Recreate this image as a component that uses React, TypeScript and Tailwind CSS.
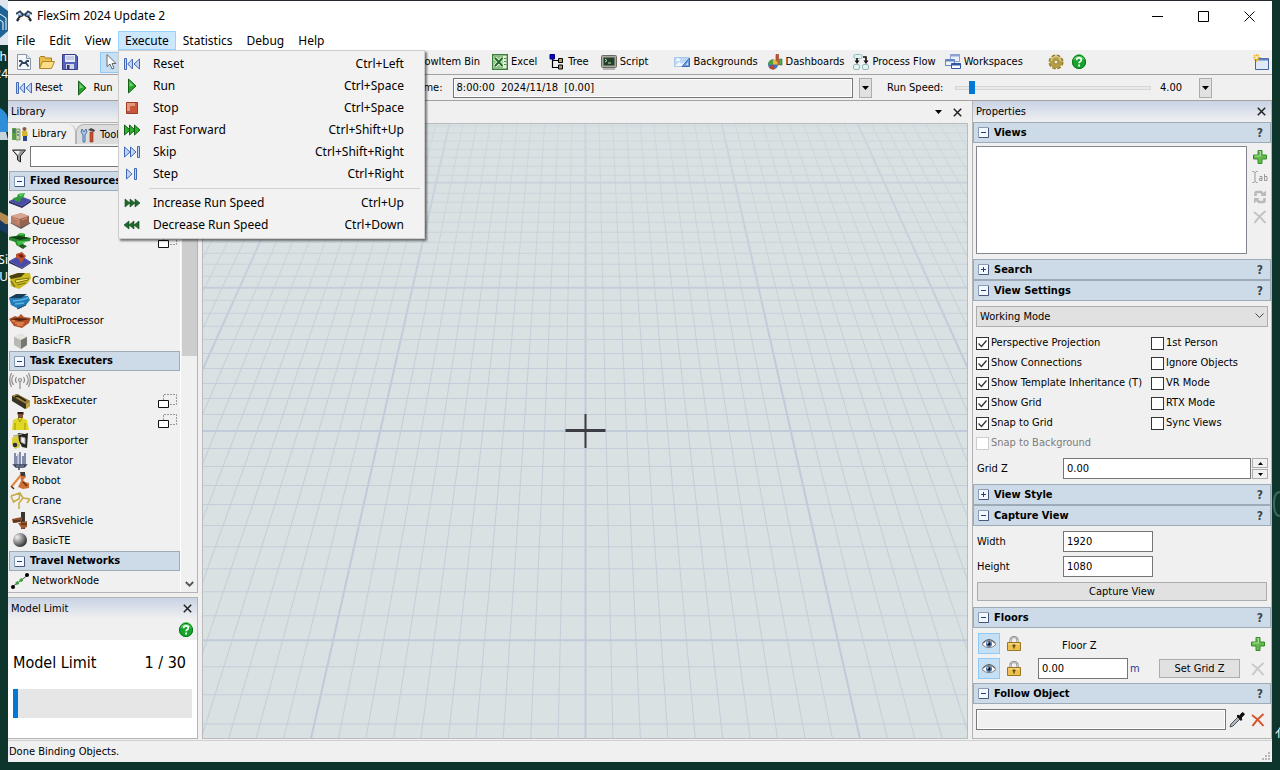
import { useState } from "react"
import type { ReactNode } from "react"
import { clsx } from "clsx"

/* ---------- small shared icons ---------- */

function RewindIcon() {
  return (
    <svg className="h-4 w-[18px] shrink-0" viewBox="0 0 18 16" fill="#c3d6f5" stroke="#4168b4">
      <path d="M1.5 2.5h2v11h-2zM9.5 3v10L4.8 8zM16.5 3v10L11 8z" />
    </svg>
  )
}

function PlayIcon() {
  return (
    <svg className="h-4 w-[18px] shrink-0" viewBox="0 0 18 16">
      <path d="M5.5 1v14L13 8z" fill="#28a428" stroke="#176017" />
      <path d="M6.5 3.5v5l4-1z" fill="#6fd36f" />
    </svg>
  )
}

function StopIcon() {
  return (
    <svg className="h-4 w-[18px] shrink-0" viewBox="0 0 18 16">
      <path d="M3.5 2.5h11v11h-11z" fill="#c9583a" stroke="#a03a1e" />
      <path d="M4 3h8v3H7v5H4z" fill="#e39a80" />
      <path d="M4 12h3" stroke="#6b5fa8" />
    </svg>
  )
}

function FastIcon() {
  return (
    <svg className="h-4 w-[18px] shrink-0" viewBox="0 0 18 16" fill="#30b030" stroke="#145c14">
      <path d="M11.5 3v10L17 8zM6.5 3v10L12 8zM1.5 3v10L7 8z" />
    </svg>
  )
}

function SkipIcon() {
  return (
    <svg className="h-4 w-[18px] shrink-0" viewBox="0 0 18 16" fill="#c3d6f5" stroke="#4168b4">
      <path d="M1.5 3v10L7 8zM7.5 3v10L13 8zM14.5 2.5h2v11h-2z" />
    </svg>
  )
}

function StepIcon() {
  return (
    <svg className="h-4 w-[18px] shrink-0" viewBox="0 0 18 16" fill="#c3d6f5" stroke="#4168b4">
      <path d="M3.5 3v10L9 8zM11.5 2.5h2v11h-2z" />
    </svg>
  )
}

function FasterIcon() {
  return (
    <svg className="h-4 w-[18px] shrink-0" viewBox="0 0 18 16" fill="#1d6b2b" stroke="#123f1a" strokeWidth=".6">
      <path d="M2 4v8l5-4zM7 4v8l5-4zM12 4v8l5-4z" />
    </svg>
  )
}

function SlowerIcon() {
  return (
    <svg className="h-4 w-[18px] shrink-0" viewBox="0 0 18 16" fill="#1d6b2b" stroke="#123f1a" strokeWidth=".6">
      <path d="M6 4v8L1 8zM11 4v8L6 8zM16 4v8l-5-4z" />
    </svg>
  )
}

function HelpIcon() {
  return (
    <svg className="size-4 shrink-0" viewBox="0 0 16 16">
      <circle cx="8" cy="8" r="7" fill="#17a32c" />
      <path d="M2 6a6 6 0 0 1 12 0q-6-3-12 0z" fill="#56cf62" />
      <circle cx="8" cy="8" r="6.6" fill="none" stroke="#0c7a1e" />
      <path d="M5.7 6.2q0-2.3 2.3-2.3t2.3 2q0 1.2-1.3 1.9-.9.5-.9 1.5" fill="none" stroke="#fff" strokeWidth="1.7" />
      <path d="M7.2 10.6h1.8v1.8H7.2z" fill="#fff" />
    </svg>
  )
}

function CloseIcon() {
  return (
    <svg className="size-[9px]" viewBox="0 0 9 9" stroke="#222" strokeWidth="1.5">
      <path d="M.8.8l7.4 7.4M8.2.8L.8 8.2" />
    </svg>
  )
}

function DownArrow() {
  return (
    <svg className="h-1 w-[7px]" viewBox="0 0 7 4">
      <path d="M0 0h7L3.5 4z" fill="#000" />
    </svg>
  )
}

function PlusIcon() {
  return (
    <svg className="size-[14px]" viewBox="0 0 14 14">
      <path d="M5 .5h4V5h4.5v4H9v4.5H5V9H.5V5H5z" fill="#63ba4b" stroke="#3b8a2c" />
      <path d="M6 1.5h1.5V6H2" stroke="#a9e09a" fill="none" />
    </svg>
  )
}

function CrossIcon({ color }: { color: string }) {
  return (
    <svg className="size-[14px]" viewBox="0 0 14 14" fill="none" stroke={color} strokeWidth="2">
      <path d="M1 2q6 4 11.5 11M12.5 1Q6 6 1.5 13" />
    </svg>
  )
}

function EyeIcon() {
  return (
    <svg className="h-3 w-4" viewBox="0 0 16 12">
      <path d="M1 6.5Q8-1.5 15 6.5 8 13 1 6.5z" fill="#fff" stroke="#7f7f7f" />
      <path d="M1.5 5Q8-2 14.5 5" fill="none" stroke="#555" />
      <circle cx="8" cy="6" r="3" fill="#4a6da0" />
      <circle cx="8" cy="6" r="1.4" fill="#111" />
      <circle cx="6.8" cy="5" r=".8" fill="#fff" />
    </svg>
  )
}

function LockIcon() {
  return (
    <svg className="h-[15px] w-[14px]" viewBox="0 0 14 15">
      <path d="M3.5 7V4a3.5 3 0 0 1 7 0v3" fill="none" stroke="#777" strokeWidth="2" />
      <path d="M3.5 7V4a3.5 3 0 0 1 7 0v3" fill="none" stroke="#e3e3e3" strokeWidth=".8" />
      <path d="M.5 6.5h13v8H.5z" fill="#edc14d" stroke="#9b7524" />
      <path d="M1.5 8h11" stroke="#fbe7a4" />
      <path d="M7 8.5v4M5.5 9.5h3" stroke="#5e440e" strokeWidth="1.4" />
    </svg>
  )
}

function ToggleBox({ open }: { open: boolean }) {
  return (
    <svg className="size-[11px] shrink-0" viewBox="0 0 11 11">
      <path d="M.5.5h10v10H.5z" fill="#f3f7ff" stroke="#8d9cb5" />
      <path d="M10.5 1v9.5H1" fill="none" stroke="#45587c" />
      <path d="M3 5.5h5" stroke="#27406f" />
      {!open && <path d="M5.5 3v5" stroke="#27406f" />}
    </svg>
  )
}

/* Two overlapping boxes shown next to items that open a group */
function GroupMark() {
  return (
    <svg className="h-[14px] w-5" viewBox="0 0 20 14" fill="none">
      <path d="M5.5 6V.5h13v10H12" stroke="#999" strokeDasharray="2 1" />
      <path d="M.5 6.5h10v7H.5z" fill="#fff" stroke="#111" />
    </svg>
  )
}

/* ---------- application logo ---------- */

function AppLogo() {
  return (
    <svg className="h-4 w-4 shrink-0" viewBox="0 0 16 16" fill="none">
      <path d="M0 6l4-2.5 3 3h2l3-3L16 6" stroke="#33465f" strokeWidth="2" />
      <path d="M1 13l3-4.500 3-1.500M15 13l-3-4.500-3-1.500" stroke="#1f2c3d" strokeWidth="2.400" />
      <path d="M2 7l4 .5M14 7l-4 .5" stroke="#5689c4" strokeWidth="1.5" />
      <path d="M3 11l2-2M13 11l-2-2" stroke="#e1a34a" strokeWidth="1" />
    </svg>
  )
}

/* ---------- toolbar icons ---------- */

const toolIcons: Record<string, ReactNode> = {
  new: (
    <>
      <path d="M1.5.5h9l4 4v11h-13z" fill="#f6f9fc" stroke="#8797a8" />
      <path d="M10.5.5v4h4" fill="#dbe6f2" stroke="#8797a8" />
      <path d="M3 7h2l2 2h2l2-2h2M3.5 12.5l2.500-3.500M12.5 12.5L10 9" stroke="#34465e" strokeWidth="1.8" fill="none" />
    </>
  ),
  open: (
    <>
      <path d="M.5 14V3.5l1-1h4l1 1.5h6v3" fill="#e8bd4c" stroke="#a87a1f" />
      <path d="M.5 14.5l3-7h12l-3 7z" fill="#fbdd85" stroke="#b1862a" />
    </>
  ),
  save: (
    <>
      <path d="M.5.5h13l2 2v13H.5z" fill="#5561bd" stroke="#363c85" />
      <path d="M3 1h10v7H3z" fill="#e7ebf8" />
      <path d="M4 3h8M4 5h8" stroke="#a5b2d6" />
      <path d="M4 10h8v5H4z" fill="#d2d6e4" />
      <path d="M5 11h2.5v4H5z" fill="#343a72" />
    </>
  ),
  pointer: <path d="M4 .5v12l3-2.5 2 5 2-1-2-4.500h4z" fill="#fff" stroke="#666" />,
  excel: (
    <>
      <path d="M.7.7h14.6v14.6H.7z" fill="#e5f2dd" stroke="#3a7f3a" strokeWidth="1.400" />
      <path d="M2 2h9v12H2z" fill="#8cc07d" />
      <path d="M3 4l7.500 8M10.500 4L3 12" stroke="#fff" strokeWidth="3.400" />
      <path d="M3 4l7.500 8M10.500 4L3 12" stroke="#1f6a27" strokeWidth="2" />
      <path d="M12 4.5h2.500M12 7.5h2.500M12 10.5h2.500" stroke="#4a914a" />
    </>
  ),
  tree: (
    <>
      <path d="M3.5 4v9.5H10M3.5 6.5H10" fill="none" stroke="#000" strokeWidth="1.2" />
      <path d="M1 .5h4.500V5H1z" fill="#0a0ac0" stroke="#000080" />
      <path d="M9.5 4.5h4v4h-4zM9.5 11h4v4h-4z" fill="#b59a6b" stroke="#000" />
    </>
  ),
  script: (
    <>
      <rect x=".5" y="1.5" width="15" height="12" rx="1" fill="#a9a9a0" stroke="#6a6a62" />
      <path d="M2.5 3.5h11v8h-11z" fill="#25402a" />
      <path d="M4 5l2 1.500L4 8M7 9h3" stroke="#b7e0b0" fill="none" />
      <path d="M2 15h12" stroke="#777" />
    </>
  ),
  backgrounds: (
    <>
      <path d="M.5 3.5h15v9H.5z" fill="#bcd8f7" stroke="#a9c8ec" />
      <path d="M1 12l4-4 3 2 2-2v4z" fill="#f4f9ff" />
      <path d="M2 6h4M3 5h2" stroke="#fff" strokeWidth="1.5" />
      <path d="M8 12.5L15.500 4v8.500z" fill="#6e9de0" stroke="#3c6dbb" />
      <path d="M12 11l2-3v3z" fill="#d7e7fb" />
    </>
  ),
  dashboards: (
    <>
      <path d="M9 .5h2.5V11H9z" fill="#d9502c" stroke="#8c2f18" strokeWidth=".6" />
      <path d="M12.5 5H15v6h-2.500z" fill="#4bb04b" stroke="#2a702a" strokeWidth=".6" />
      <circle cx="6" cy="10.5" r="5" fill="#3f72c0" />
      <path d="M6 10.5v-5a5 5 0 0 0-5 5z" fill="#4fa13c" />
      <path d="M6 10.5h5a5 5 0 0 0-5-5z" fill="#e7b93c" />
      <path d="M6 10.5l-4 3a5 5 0 0 0 6 1.600z" fill="#c04228" />
    </>
  ),
  flow: (
    <>
      <rect x="1" y=".5" width="8" height="4" rx="1.5" fill="#e4f3f3" stroke="#93b9b9" />
      <rect x=".5" y="10.5" width="6" height="5" rx="1.5" fill="#e4f3f3" stroke="#93b9b9" />
      <rect x="9.5" y="10.5" width="6" height="5" rx="1.5" fill="#e4f3f3" stroke="#93b9b9" />
      <path d="M4 4v4M10 3h3v5" stroke="#111" strokeWidth="1.6" fill="none" />
      <path d="M1.5 6.5h5L4 10zM10.500 6.500h5L13 10z" fill="#111" />
    </>
  ),
  workspaces: (
    <>
      <path d="M5.5.5h9v7h-9z" fill="#eaf0fb" stroke="#8ba3ce" />
      <path d="M5.5 1.5h9" stroke="#8ba3ce" strokeWidth="2" />
      <path d="M.5 5.5h9v6h-9z" fill="#eef3fc" stroke="#6384c2" />
      <path d="M.5 6.5h9" stroke="#6384c2" strokeWidth="2" />
      <path d="M6.5 9.5h9v5h-9z" fill="#fff" stroke="#3157a5" />
      <path d="M6.5 10.5h9" stroke="#3157a5" strokeWidth="2" />
    </>
  ),
  gear: (
    <>
      <circle cx="8" cy="8" r="6" fill="none" stroke="#8f7a2c" strokeWidth="3" strokeDasharray="3.200 1.510" />
      <circle cx="8" cy="8" r="4.200" fill="none" stroke="#b59d45" strokeWidth="4" />
      <path d="M3.500 7a4.500 4.500 0 0 1 9 0" fill="none" stroke="#dcc980" strokeWidth="1.500" />
      <circle cx="8" cy="8" r="2" fill="#f4f0dd" stroke="#8f7a2c" />
    </>
  ),
  window: (
    <>
      <path d="M2.5 4.5h13v11h-13z" fill="#dfe9f8" stroke="#45659f" />
      <path d="M3 5.5h12" stroke="#5c80c3" strokeWidth="2" />
      <path d="M3.5 0v8M0 3.5h8M1 1l5 5M6 1L1 6" stroke="#e3b83e" strokeWidth="1.2" />
      <circle cx="3.5" cy="3.5" r="1.5" fill="#fff3b0" />
    </>
  ),
}

function ToolIcon({ name }: { name: string }) {
  return (
    <svg className="size-4 shrink-0" viewBox="0 0 16 16">
      {toolIcons[name]}
    </svg>
  )
}

function ToolButton({ icon, label }: { icon: string; label: string }) {
  return (
    <button className="flex items-center gap-[3px] whitespace-nowrap">
      <ToolIcon name={icon} />
      {label}
    </button>
  )
}

/* ---------- library icons ---------- */

const libraryIcons: Record<string, ReactNode> = {
  Source: (
    <>
      <path d="M0 9l11-5 11 4-9 6z" fill="#4a4aa8" />
      <path d="M0 9l13 5 9-6v2l-9 6L0 11z" fill="#2b2b66" />
      <path d="M4 6l4-1 1-3 7-1-2 5-2 1-1 3-5-1z" fill="#2f9a3c" />
      <path d="M9 2l7-1-4 4z" fill="#5cc763" />
    </>
  ),
  Queue: (
    <>
      <path d="M1 11l10-3 11 3-10 6z" fill="#6a5850" />
      <path d="M2 4l10-3 8 3v7l-9 4-9-4z" fill="#b27e6a" />
      <path d="M2 4l10-3 8 3-9 3z" fill="#d7a591" />
      <path d="M11 7v8l9-4V4z" fill="#936352" />
      <path d="M4 6l5 2v4M13 8l5-2" stroke="#e88b68" fill="none" />
    </>
  ),
  Processor: (
    <>
      <path d="M0 5l7-1 4-3 5 1v3l6 1-1 3-7 1-1 3-5 1-2-4-6-2z" fill="#278a2e" />
      <path d="M0 5l10-1 11 2-10 2z" fill="#123f15" />
      <path d="M8 10h8M9 12h6M10 2h5" stroke="#4ccb50" strokeWidth="1.5" />
      <path d="M9 14l5 3 4-3-5-2z" fill="#1e5f22" />
    </>
  ),
  Sink: (
    <>
      <path d="M0 9l11-6 11 7-9 6z" fill="#4a4aa8" />
      <path d="M0 9l13 7 9-6v1l-9 6L0 11z" fill="#2b2b66" />
      <path d="M7 2l6-2 4 4-3 4-2 4-2-5-3-1z" fill="#c05030" />
      <path d="M9 3l4-1 2 3-3 1z" fill="#712414" />
    </>
  ),
  Combiner: (
    <>
      <path d="M1 4l8-3h12l1 5-3 5-9 6-8-3z" fill="#cdbb24" />
      <path d="M0 4l9-3h7l-4 4-10 2z" fill="#4a430f" />
      <path d="M6 8l14-2-1 2-12 3zM8 13l9-2" stroke="#7e720f" fill="#efe25c" />
      <path d="M2 9l4 6" stroke="#807515" strokeWidth="1.5" />
    </>
  ),
  Separator: (
    <>
      <path d="M0 6l7-3 12 1 2 4-4 5-7 4-8-4z" fill="#257bb5" />
      <path d="M0 6l7-4h11l-6 4z" fill="#183c58" />
      <path d="M4 9l8-1 7-2M6 12l9-1" stroke="#58b4e8" strokeWidth="1.5" fill="none" />
      <path d="M8 17l9-4" stroke="#12496f" />
    </>
  ),
  MultiProcessor: (
    <>
      <path d="M0 7l6-3 3 1 3-3 3 3 7 1-2 5-7 5-8-2-3-4z" fill="#b4532a" />
      <path d="M1 7l8-1 12 1-10 2z" fill="#57220d" />
      <path d="M6 11h9M8 13h6M3 9h3" stroke="#e58a55" strokeWidth="1.5" />
    </>
  ),
  BasicFR: (
    <>
      <path d="M5 5l7-3 6 3v8l-6 4-7-4z" fill="#b9b9b3" />
      <path d="M5 5l7-3 6 3-6 3z" fill="#e6e6e0" />
      <path d="M12 8l6-3v8l-6 4z" fill="#777770" />
    </>
  ),
  Dispatcher: (
    <g fill="none" stroke="#8b8b8b" strokeWidth="1.2">
      <circle cx="11" cy="8" r="1.5" />
      <path d="M11 9.500V17M7.500 5q-2 3 0 6M14.500 5q2 3 0 6M4.500 3q-3.500 5 0 10M17.500 3q3.500 5 0 10M2.500 1Q-1 8 2.500 15M19.500 1q3.500 7 0 14" />
    </g>
  ),
  TaskExecuter: (
    <>
      <path d="M3 4l5-2 13 7v5l-5 3-13-8z" fill="#383225" />
      <path d="M3 4l5-2 13 7-4 3z" fill="#9b8438" />
      <path d="M6 5l3-1 8 5" stroke="#221d12" fill="none" strokeWidth="1.5" />
      <path d="M17 12l4-3v5l-4 3z" fill="#c3aa3d" />
    </>
  ),
  Operator: (
    <>
      <path d="M9 0h5v6H9z" fill="#805336" />
      <path d="M8.500 0h6v3l-1-1H9l-.5 1z" fill="#2c1b12" />
      <path d="M4 8l5-2h4l5 2 2 10H3z" fill="#e0d720" />
      <path d="M9 6l2 4 2-4M6 11v7M16 11v7" stroke="#9f970f" fill="none" />
    </>
  ),
  Transporter: (
    <>
      <path d="M3 6l6-4 2 3v10l-5 2-3-5z" fill="#d9cd3c" />
      <path d="M9 1l7 1 3-1-1 15-5-1-3-6z" fill="#26241e" />
      <path d="M4 4l9-2M12 5l4 1v6l-4-2z" stroke="#aaa" fill="#f2f2e8" />
      <circle cx="6" cy="13" r="2.3" fill="#333" />
    </>
  ),
  Elevator: (
    <g fill="none" stroke="#5d6b92" strokeWidth="1.5">
      <path d="M6 1v13M11 0v14M16 1v14M8 4v9M14 4v9" />
      <path d="M5 13h12l-2 2H7zM10 15v3" stroke="#39415e" />
      <path d="M9 2v10" stroke="#b7c1da" />
    </g>
  ),
  Robot: (
    <>
      <path d="M11 2l5-1 1 4-3 3 2 2 4 1v5l-6 1-5-2 3-6z" fill="#cf6f35" />
      <path d="M12 3L3 14" stroke="#e0853d" strokeWidth="2" />
      <path d="M11 0h5v4h-4z" fill="#3b3b3b" />
      <path d="M2 14l3 3M14 10l4 4" stroke="#5d2d12" strokeWidth="1.5" />
    </>
  ),
  Crane: (
    <g fill="none" stroke="#c8a944" strokeWidth="1.5">
      <path d="M2 4l9-3 3 5 7 1M2 4l3 7M11 1l-1 6-6 3M14 6l-4 5v6M21 7l-3 4" />
    </g>
  ),
  ASRSvehicle: (
    <>
      <path d="M12 0h4v17h-4z" fill="#3c352f" />
      <path d="M3 7l10-2v4l-6 2H4z" fill="#8b4d2a" />
      <path d="M9 11l9-2v6l-5 2z" fill="#a35a2f" />
      <path d="M4 9h8M12 12h6" stroke="#331c0f" />
    </>
  ),
  BasicTE: (
    <>
      <defs>
        <radialGradient id="ball" cx=".3" cy=".3" r=".8">
          <stop offset="0" stopColor="#f3f3f3" />
          <stop offset=".5" stopColor="#8c8c8c" />
          <stop offset="1" stopColor="#222" />
        </radialGradient>
      </defs>
      <circle cx="11" cy="8" r="7" fill="url(#ball)" />
    </>
  ),
  NetworkNode: (
    <>
      <path d="M3 15L19 3" stroke="#555" />
      <path d="M7 12l8-6" stroke="#3ba03b" strokeWidth="3" strokeDasharray="3 2" />
      <circle cx="4" cy="15" r="2" />
      <circle cx="18" cy="3" r="2" />
    </>
  ),
}

const library = [
  {
    title: "Fixed Resources",
    items: ["Source", "Queue", "Processor", "Sink", "Combiner", "Separator", "MultiProcessor", "BasicFR"],
  },
  {
    title: "Task Executers",
    items: [
      "Dispatcher",
      "TaskExecuter",
      "Operator",
      "Transporter",
      "Elevator",
      "Robot",
      "Crane",
      "ASRSvehicle",
      "BasicTE",
    ],
  },
  { title: "Travel Networks", items: ["NetworkNode"] },
]

const grouped = ["Processor", "TaskExecuter", "Operator"]

/* ---------- menu ---------- */

const executeMenu = [
  { label: "Reset", keys: "Ctrl+Left", icon: <RewindIcon /> },
  { label: "Run", keys: "Ctrl+Space", icon: <PlayIcon /> },
  { label: "Stop", keys: "Ctrl+Space", icon: <StopIcon /> },
  { label: "Fast Forward", keys: "Ctrl+Shift+Up", icon: <FastIcon /> },
  { label: "Skip", keys: "Ctrl+Shift+Right", icon: <SkipIcon /> },
  { label: "Step", keys: "Ctrl+Right", icon: <StepIcon /> },
]

const speedMenu = [
  { label: "Increase Run Speed", keys: "Ctrl+Up", icon: <FasterIcon /> },
  { label: "Decrease Run Speed", keys: "Ctrl+Down", icon: <SlowerIcon /> },
]

function MenuRow({ label, keys, icon }: { label: string; keys: string; icon: ReactNode }) {
  return (
    <button role="menuitem" className="flex h-[22px] w-full items-center pr-5 pl-1 hover:bg-[#91c9f7]">
      {icon}
      <span className="ml-3 flex-1 text-left">{label}</span>
      <span>{keys}</span>
    </button>
  )
}

function MenuBar() {
  const [open, setOpen] = useState(true)

  return (
    <nav className="flex h-[19px] pl-px font-['Noto_Sans',sans-serif] text-xs">
      {["File", "Edit", "View"].map((name) => (
        <button key={name} className="px-[7px]">
          {name}
        </button>
      ))}
      <div className="relative">
        <button
          className={clsx("h-full border px-1.5", open ? "border-[#99d1ff] bg-[#cce8ff]" : "border-transparent")}
          onClick={() => setOpen(!open)}
        >
          Execute
        </button>
        {open && (
          <div
            role="menu"
            className="absolute top-full left-0 z-10 w-[307px] border border-[#ccc] bg-[#f2f2f2] py-[2px] shadow-[2px_2px_2px_rgba(0,0,0,0.5)]"
          >
            {executeMenu.map((item) => (
              <MenuRow key={item.label} {...item} />
            ))}
            <div className="my-[3px] mr-1 ml-[30px] h-px bg-[#d0d0d0]" />
            {speedMenu.map((item) => (
              <MenuRow key={item.label} {...item} />
            ))}
          </div>
        )}
      </div>
      {["Statistics", "Debug", "Help"].map((name) => (
        <button key={name} className="px-[7px]">
          {name}
        </button>
      ))}
    </nav>
  )
}

/* ---------- window chrome ---------- */

function TitleBar() {
  return (
    <header className="flex h-[30px] items-center pl-2 font-['Noto_Sans',sans-serif] text-xs">
      <AppLogo />
      <h1 className="ml-[5px] flex-1">FlexSim 2024 Update 2</h1>
      <button aria-label="Minimize" className="flex h-full w-[46px] items-center justify-center">
        <svg className="size-[11px]" viewBox="0 0 11 11" stroke="#000">
          <path d="M0 5.5h11" />
        </svg>
      </button>
      <button aria-label="Maximize" className="flex h-full w-[46px] items-center justify-center">
        <svg className="size-[11px]" viewBox="0 0 11 11" fill="none" stroke="#000">
          <path d="M.5.5h10v10H.5z" />
        </svg>
      </button>
      <button aria-label="Close" className="flex h-full w-[46px] items-center justify-center">
        <svg className="size-[11px]" viewBox="0 0 11 11" stroke="#000">
          <path d="M.5.5l10 10M10.5.5l-10 10" />
        </svg>
      </button>
    </header>
  )
}

function MainToolbar() {
  return (
    <div className="flex h-[25px] items-center gap-3 border-b border-[#a8a0a0] pr-[3px] pl-2">
      <div className="flex items-center gap-[7px]">
        <button aria-label="New">
          <ToolIcon name="new" />
        </button>
        <button aria-label="Open">
          <ToolIcon name="open" />
        </button>
        <button aria-label="Save">
          <ToolIcon name="save" />
        </button>
      </div>
      <button
        aria-label="Select"
        className="ml-[10px] flex h-[21px] w-[22px] items-center justify-center border border-[#90c8f6] bg-[#c5dff5]"
      >
        <ToolIcon name="pointer" />
      </button>
      <div className="ml-[263px] flex items-center gap-3">
        <ToolButton icon="tree" label="FlowItem Bin" />
        <ToolButton icon="excel" label="Excel" />
        <ToolButton icon="tree" label="Tree" />
        <ToolButton icon="script" label="Script" />
      </div>
      <div className="ml-[14px] flex items-center gap-[9px]">
        <ToolButton icon="backgrounds" label="Backgrounds" />
        <ToolButton icon="dashboards" label="Dashboards" />
        <ToolButton icon="flow" label="Process Flow" />
        <ToolButton icon="workspaces" label="Workspaces" />
      </div>
      <div className="ml-[13px] flex flex-1 items-center gap-[7px]">
        <button aria-label="Settings">
          <ToolIcon name="gear" />
        </button>
        <button aria-label="Help">
          <HelpIcon />
        </button>
      </div>
      <button aria-label="New window">
        <ToolIcon name="window" />
      </button>
    </div>
  )
}

function RunToolbar() {
  const [speed, setSpeed] = useState(7)

  return (
    <div className="flex h-[26px] items-center border-b border-[#a8a0a0] pr-[60px] pl-[7px]">
      <button className="flex items-center gap-0.5">
        <RewindIcon />
        Reset
      </button>
      <button className="ml-[10px] flex items-center gap-[3px]">
        <PlayIcon />
        Run
      </button>
      <label htmlFor="run-time" className="ml-[276px] w-[54px] text-right whitespace-nowrap">
        Run Time:
      </label>
      <input
        id="run-time"
        readOnly
        value="8:00:00  2024/11/18  [0.00]"
        className="ml-[10px] h-5 min-w-0 flex-1 border border-[#767676] bg-[#f0f0f0] px-[3px] whitespace-pre outline outline-offset-[-2px] outline-white"
      />
      <button
        aria-label="Run time options"
        className="ml-1.5 flex h-5 w-[13px] items-center justify-center border border-[#adadad] bg-[#e1e1e1]"
      >
        <DownArrow />
      </button>
      <label htmlFor="speed" className="ml-[15px] w-[56px] whitespace-nowrap">
        Run Speed:
      </label>
      <input
        id="speed"
        type="range"
        min={0}
        max={100}
        value={speed}
        onChange={(e) => setSpeed(Number(e.target.value))}
        className="ml-3 h-1 w-[196px] appearance-none border border-[#d6d6d6] bg-[#e7eaea] [&::-webkit-slider-thumb]:h-[13px] [&::-webkit-slider-thumb]:w-1.5 [&::-webkit-slider-thumb]:appearance-none [&::-webkit-slider-thumb]:bg-[#0078d7]"
      />
      <span className="ml-[9px] w-[39px]">4.00</span>
      <button
        aria-label="Run speed options"
        className="flex h-5 w-[13px] items-center justify-center border border-[#adadad] bg-[#e1e1e1]"
      >
        <DownArrow />
      </button>
    </div>
  )
}

function PanelHeader({ title }: { title: string }) {
  return (
    <div className="flex h-[21px] shrink-0 items-center justify-between bg-linear-to-b from-[#c9d3e5] to-[#f0f0f0] pr-[5px] pl-[3px]">
      <h2>{title}</h2>
      <button aria-label={`Close ${title}`}>
        <CloseIcon />
      </button>
    </div>
  )
}

/* ---------- left side ---------- */

function LibraryPanel() {
  return (
    <section className="flex min-h-0 flex-1 flex-col border-r border-b border-[#b4b4b4]">
      <PanelHeader title="Library" />
      <div className="flex h-[22px] shrink-0 items-end border-t border-[#b4b4b4]">
        <button className="flex h-5 w-[68px] items-center gap-[3px] rounded-tr-lg border-r border-[#b4b4b4] pl-[3px]">
          <svg className="h-4 w-[18px] shrink-0" viewBox="0 0 18 16">
            <path d="M1 2h4v12H1z" fill="#5f9e4a" />
            <path d="M5 3h4v11H5z" fill="#c4dca4" stroke="#5f7f43" strokeWidth=".7" />
            <path d="M2 4h2M2 6h2M6 6h2M6 9h2" stroke="#2c48a0" />
            <path d="M11 5h5l1 5h-1v5h-4v-5h-1z" fill="#d7b631" />
            <path d="M12 10h4v5h-4z" fill="#2c4588" />
            <circle cx="13.5" cy="3" r="2" fill="#8a5a34" />
          </svg>
          Library
        </button>
        <button className="flex h-5 flex-1 items-center gap-1 rounded-tl-lg border border-b-0 border-[#b4b4b4] bg-[#dcdcdc] pl-[3px]">
          <svg className="size-4 shrink-0" viewBox="0 0 16 16">
            <path d="M2 2l2 3 2-3 1 3-2 3v7H3V8L1 5z" fill="#a9c8ea" stroke="#4d76ab" />
            <path d="M8 3l3-2 4 2-1 2-3-1z" fill="#444" />
            <path d="M10 5h3v10h-3z" fill="#cc4f2d" stroke="#85301a" strokeWidth=".6" />
          </svg>
          Toolbox
        </button>
      </div>
      <div className="flex h-6 shrink-0 items-center gap-1 pl-1">
        <svg className="size-[14px] shrink-0" viewBox="0 0 14 14">
          <path d="M.5 1h13l-5 6v6l-3-2V7z" fill="#9a9a9a" stroke="#222" />
          <path d="M2 2h6L6 6z" fill="#f3f3f3" />
        </svg>
        <input
          aria-label="Filter library"
          className="h-[21px] min-w-0 flex-1 border border-[#767676] bg-white"
        />
      </div>
      <div className="flex min-h-0 flex-1 pt-[3px]">
        <div className="flex-1 overflow-hidden pl-px">
          {library.map((group) => (
            <div key={group.title}>
              <h3 className="flex h-5 items-center gap-[5px] border border-[#9dabb8] bg-[#cddbe8] pl-1 font-bold">
                <ToggleBox open />
                {group.title}
              </h3>
              <ul>
                {group.items.map((name) => (
                  <li key={name} className="flex h-5 items-center gap-px pr-0.5">
                    <svg className="h-[18px] w-[22px] shrink-0" viewBox="0 0 22 18">
                      {libraryIcons[name]}
                    </svg>
                    <span className="flex-1">{name}</span>
                    {grouped.includes(name) && <GroupMark />}
                  </li>
                ))}
              </ul>
            </div>
          ))}
          <svg className="h-5 w-[22px]" viewBox="0 0 22 20">
            <path d="M11 1l4 6H7z" fill="#d9b936" stroke="#6f5a10" />
          </svg>
        </div>
        <div className="flex w-[17px] flex-col items-center justify-between border-l border-white">
          <div className="h-[185px] w-[15px] bg-[#cdcdcd]" />
          <svg className="mb-1 h-2 w-[9px]" viewBox="0 0 9 8" fill="none" stroke="#555" strokeWidth="1.8">
            <path d="M.8 2l3.700 3.700L8.200 2" />
          </svg>
        </div>
      </div>
    </section>
  )
}

function ModelLimitPanel() {
  const used = 1
  const limit = 30

  return (
    <section className="mt-1 flex h-[142px] shrink-0 flex-col border border-l-0 border-[#b4b4b4]">
      <PanelHeader title="Model Limit" />
      <div className="flex h-[21px] items-center justify-end pr-[3px]">
        <button aria-label="Model limit help">
          <HelpIcon />
        </button>
      </div>
      <div className="flex-1 bg-white px-[5px] pt-4">
        <div className="flex justify-between pr-1.5 text-[16px]">
          <span>Model Limit</span>
          <span>
            {used} / {limit}
          </span>
        </div>
        <div className="mt-[19px] h-[29px] bg-[#e6e6e6]">
          <div className="h-full bg-[#0078d7]" style={{ width: `${(used / limit) * 85}%` }} />
        </div>
      </div>
    </section>
  )
}

/* ---------- 3D view ---------- */

const CENTER_X = 585
const CENTER_Y = 431
const HORIZON = -480
const STEP = 20.5

function ModelView() {
  const rows = []
  for (let n = -40; n <= 16; n++) {
    const y = Math.round(CENTER_Y + (n * (CENTER_Y - HORIZON)) / (53.6 - n))
    // thin lines sit on half pixels so they stay one pixel wide
    rows.push({ n, y: n % 10 === 0 ? y : y + 0.5 })
  }
  const columns = []
  for (let n = -34; n <= 34; n++) {
    columns.push({ n, x: CENTER_X + (n * STEP * (740 - HORIZON)) / (CENTER_Y - HORIZON) })
  }

  return (
    <section className="flex min-w-0 flex-1 flex-col">
      <div className="flex h-[22px] shrink-0 items-center justify-end gap-[11px] pr-[6px]">
        <button aria-label="View list">
          <DownArrow />
        </button>
        <button aria-label="Close view">
          <CloseIcon />
        </button>
      </div>
      <div className="min-h-0 flex-1 border border-[#b8bcbc] bg-[#d9e1e2]">
        <svg className="block h-full w-full" viewBox="203 124 763 614" preserveAspectRatio="xMidYMid slice">
          <defs>
            <linearGradient id="haze" x1="0" y1="0" x2="0" y2="1">
              <stop offset="0" stopColor="#d9e1e2" stopOpacity=".5" />
              <stop offset="1" stopColor="#d9e1e2" stopOpacity="0" />
            </linearGradient>
          </defs>
          {columns.map(({ n, x }) => (
            <line
              key={n}
              x1={CENTER_X}
              y1={HORIZON}
              x2={x}
              y2={740}
              stroke={n % 10 === 0 ? "#c0cbd9" : "#c4ced9"}
              strokeWidth={n % 10 === 0 ? 2 : 1}
            />
          ))}
          {rows.map(({ n, y }) => (
            <line
              key={n}
              x1={200}
              y1={y}
              x2={970}
              y2={y}
              stroke={n % 10 === 0 ? "#c0cbd9" : "#c4ced9"}
              strokeWidth={n % 10 === 0 ? 2 : 1}
            />
          ))}
          <rect x="200" y="120" width="770" height="250" fill="url(#haze)" />
          <path d="M585 414v34" stroke="#3c3c44" strokeWidth="2" />
          <path d="M565 430.5h40" stroke="#3c3c44" strokeWidth="3" />
        </svg>
      </div>
    </section>
  )
}

/* ---------- properties ---------- */

function SectionHeader({ title, open = true }: { title: string; open?: boolean }) {
  return (
    <div className="flex h-[21px] items-center gap-[5px] border border-[#9dabb8] bg-[#cddbe8] pr-[7px] pl-1">
      <ToggleBox open={open} />
      <h3 className="flex-1 font-bold">{title}</h3>
      <button aria-label={`${title} help`} className="text-[12px] font-bold text-[#444]">
        ?
      </button>
    </div>
  )
}

function CheckBox({ label, checked = false, disabled = false }: { label: string; checked?: boolean; disabled?: boolean }) {
  return (
    <label className={clsx("flex h-5 items-center gap-0.5 whitespace-nowrap", disabled && "text-[#7d7d7d]")}>
      <span className="relative size-[13px] shrink-0">
        <input
          type="checkbox"
          defaultChecked={checked}
          disabled={disabled}
          className="peer block size-[13px] appearance-none border border-[#333] bg-white disabled:border-[#ccc]"
        />
        <svg
          className="pointer-events-none absolute inset-0 hidden size-[13px] peer-checked:block"
          viewBox="0 0 13 13"
          fill="none"
          stroke="#333"
          strokeWidth="1.3"
        >
          <path d="M2.5 6.5l3 3 5-6" />
        </svg>
      </span>
      {label}
    </label>
  )
}

function FloorToggles() {
  return (
    <>
      <button
        aria-label="Show floor"
        className="flex h-[21px] w-[22px] items-center justify-center border border-[#90c8f6] bg-[#c5dff5]"
      >
        <EyeIcon />
      </button>
      <button aria-label="Lock floor" className="ml-[7px]">
        <LockIcon />
      </button>
    </>
  )
}

const field = "h-[21px] border border-[#767676] bg-white px-[3px]"
const pushButton = "border border-[#adadad] bg-[#e1e1e1]"

function PropertiesPanel() {
  return (
    <aside className="flex w-[300px] shrink-0 flex-col border border-t-0 border-[#b4b4b4]">
      <PanelHeader title="Properties" />

      <SectionHeader title="Views" />
      <div className="flex gap-[5px] pt-[3px] pr-[3px] pb-[5px] pl-[3px]">
        <div className="h-[108px] flex-1 border border-[#828790] bg-white" />
        <div className="flex w-4 flex-col items-center gap-1.5 pt-1">
          <button aria-label="Add view">
            <PlusIcon />
          </button>
          <button aria-label="Rename view" disabled>
            <svg className="h-[14px] w-4" viewBox="0 0 16 14" fill="none" stroke="#999">
              <path d="M.5 1.500H2l1 1 1-1h1.500M.5 12.500H2l1-1 1 1h1.500M3 2v10" />
              <path d="M7.500 6.500h2.500v4H7.500v-2H10M12.500 4v6.500H15v-4h-2.500" />
            </svg>
          </button>
          <button aria-label="Refresh view" disabled>
            <svg className="size-[14px]" viewBox="0 0 14 14" fill="none" stroke="#b9b9b9" strokeWidth="2.6">
              <path d="M2.500 6V3.500q0-1.500 1.500-1.500h4l2 2M11.500 8v2.500q0 1.500-1.500 1.500H6l-2-2" />
              <path d="M13 .5V6H7.500zM1 13.500V8h5.500z" fill="#b9b9b9" stroke="none" />
            </svg>
          </button>
          <button aria-label="Delete view" disabled>
            <CrossIcon color="#c2c2c2" />
          </button>
        </div>
      </div>

      <SectionHeader title="Search" open={false} />
      <SectionHeader title="View Settings" />
      <div className="px-[3px] pt-[5px] pb-[5px]">
        <div className="relative">
          <select aria-label="View mode" className={clsx(pushButton, "h-[21px] w-full appearance-none px-[3px]")}>
            <option>Working Mode</option>
          </select>
          <svg
            className="pointer-events-none absolute top-[7px] right-1 h-1.5 w-[9px]"
            viewBox="0 0 9 6"
            fill="none"
            stroke="#444"
          >
            <path d="M.5.5l4 4 4-4" />
          </svg>
        </div>
        <div className="mt-[6px] flex">
          <div className="w-[175px]">
            <CheckBox label="Perspective Projection" checked />
            <CheckBox label="Show Connections" checked />
            <CheckBox label="Show Template Inheritance (T)" checked />
            <CheckBox label="Show Grid" checked />
            <CheckBox label="Snap to Grid" checked />
            <CheckBox label="Snap to Background" disabled />
          </div>
          <div>
            <CheckBox label="1st Person" />
            <CheckBox label="Ignore Objects" />
            <CheckBox label="VR Mode" />
            <CheckBox label="RTX Mode" />
            <CheckBox label="Sync Views" />
          </div>
        </div>
        <div className="mt-[5px] flex items-center pl-px">
          <label htmlFor="grid-z" className="w-[86px]">
            Grid Z
          </label>
          <input id="grid-z" defaultValue="0.00" className={clsx(field, "min-w-0 flex-1")} />
          <div className="ml-px flex flex-col gap-px">
            <button
              aria-label="Raise grid"
              className="flex h-[10px] w-4 items-center justify-center border border-[#adadad] bg-[#f0f0f0]"
            >
              <svg className="h-[3px] w-[5px]" viewBox="0 0 5 3">
                <path d="M0 3h5L2.5 0z" />
              </svg>
            </button>
            <button
              aria-label="Lower grid"
              className="flex h-[10px] w-4 items-center justify-center border border-[#adadad] bg-[#f0f0f0]"
            >
              <svg className="h-[3px] w-[5px]" viewBox="0 0 5 3">
                <path d="M0 0h5L2.5 3z" />
              </svg>
            </button>
          </div>
        </div>
      </div>

      <SectionHeader title="View Style" open={false} />
      <SectionHeader title="Capture View" />
      <div className="flex flex-col gap-1 px-1 pt-[5px] pb-1.5">
        <div className="flex items-center">
          <label htmlFor="width" className="w-[86px]">
            Width
          </label>
          <input id="width" defaultValue="1920" className={clsx(field, "w-[90px]")} />
        </div>
        <div className="flex items-center">
          <label htmlFor="height" className="w-[86px]">
            Height
          </label>
          <input id="height" defaultValue="1080" className={clsx(field, "w-[90px]")} />
        </div>
        <button className={clsx(pushButton, "mt-px h-[19px]")}>Capture View</button>
      </div>

      <SectionHeader title="Floors" />
      <div className="flex flex-col gap-1 pt-[5px] pr-1.5 pb-1 pl-[5px]">
        <div className="flex items-center">
          <FloorToggles />
          <span className="ml-[41px] flex-1 pt-1">Floor Z</span>
          <button aria-label="Add floor">
            <PlusIcon />
          </button>
        </div>
        <div className="flex items-center">
          <FloorToggles />
          <input aria-label="Floor Z" defaultValue="0.00" className={clsx(field, "ml-[17px] w-[90px]")} />
          <span className="ml-0.5 flex-1 text-[#2b3990]">m</span>
          <button className={clsx(pushButton, "mr-[11px] h-[19px] w-[81px]")}>Set Grid Z</button>
          <button aria-label="Delete floor" disabled>
            <CrossIcon color="#c9c9c9" />
          </button>
        </div>
      </div>

      <SectionHeader title="Follow Object" />
      <div className="flex items-center gap-[3px] pt-[5px] pr-1.5 pl-[3px]">
        <input
          aria-label="Follow object"
          readOnly
          className="h-[21px] min-w-0 flex-1 border border-[#767676] bg-[#f0f0f0] outline outline-offset-[-2px] outline-white"
        />
        <button aria-label="Pick object">
          <svg className="size-4" viewBox="0 0 16 16">
            <path d="M1 15l1-3 7-7 2 2-7 7z" fill="#a9b8c4" stroke="#555" />
            <path d="M8 4l1-1 1.500 1L13 .8q2-.5 2.300 1.700L12 6l1 1-1 1.500z" fill="#111" stroke="#111" />
          </svg>
        </button>
        <button aria-label="Clear object" className="ml-[3px]">
          <CrossIcon color="#d4532a" />
        </button>
      </div>
    </aside>
  )
}

/* ---------- desktop around the window ---------- */

function DesktopLeft() {
  return (
    <div className="relative w-2 shrink-0 overflow-hidden font-['Noto_Sans',sans-serif] text-xs text-white">
      <svg className="absolute top-0 left-0 h-[300px] w-2" viewBox="0 0 8 300">
        <path d="M0 0h8v45H0z" fill="#dfe6ee" />
        <path d="M0 5l8 6v20l-8 7z" fill="#1f6496" />
        <path d="M0 14l6 4v12M0 20l3 2v8" stroke="#fff" fill="none" />
        <path d="M0 108q8 4 8 14v10H0z" fill="#2e8fd8" />
        <path d="M0 132h6l2 8H0z" fill="#c8d4dc" />
        <path d="M0 212l8 4v8l-8 2z" fill="#b58a4e" />
        <path d="M0 220l8 6v8l-8-4z" fill="#173b63" />
      </svg>
      <span className="absolute top-[49px] right-px">h</span>
      <span className="absolute top-[66px] right-0">24</span>
      <span className="absolute top-[252px] right-0">Si</span>
      <span className="absolute top-[269px] right-0">U</span>
    </div>
  )
}

function DesktopRight() {
  return (
    <div className="relative w-2 shrink-0 overflow-hidden text-white">
      <svg className="absolute top-[480px] left-0 h-[50px] w-2" viewBox="0 0 8 50" fill="none">
        <path d="M8 12q-6 0-6 12t6 12" stroke="#3c6b5d" strokeWidth="2" />
      </svg>
      <span className="absolute top-[725px] left-[3px] font-['Noto_Sans_CJK_SC',sans-serif] text-xs">亻</span>
    </div>
  )
}

export default function App() {
  return (
    <div className="flex h-screen overflow-hidden bg-[#0d352c] font-['DejaVu_Sans_Condensed','DejaVu_Sans',sans-serif] text-[11px] leading-[14px] text-black">
      <DesktopLeft />
      <div className="flex min-w-0 flex-1 flex-col border-t border-[#23272e] pb-2">
        <div className="bg-white">
          <TitleBar />
          <MenuBar />
        </div>
        <div className="flex min-h-0 flex-1 flex-col bg-[#f0f0f0]">
          <MainToolbar />
          <RunToolbar />
          <main className="flex min-h-0 flex-1">
            <div className="flex w-[190px] shrink-0 flex-col">
              <LibraryPanel />
              <ModelLimitPanel />
            </div>
            <div className="flex min-w-0 flex-1 px-1">
              <ModelView />
            </div>
            <PropertiesPanel />
          </main>
          <footer className="mt-px flex h-[22px] shrink-0 items-center border-t border-[#d0d0d0] pl-px">
            <span className="flex-1">Done Binding Objects.</span>
            <svg className="size-[10px] self-end" viewBox="0 0 10 10" fill="#b8b8b8">
              <path d="M6 0h2v2H6zM3 3h2v2H3zM6 3h2v2H6zM0 6h2v2H0zM3 6h2v2H3zM6 6h2v2H6z" />
            </svg>
          </footer>
        </div>
      </div>
      <DesktopRight />
    </div>
  )
}
